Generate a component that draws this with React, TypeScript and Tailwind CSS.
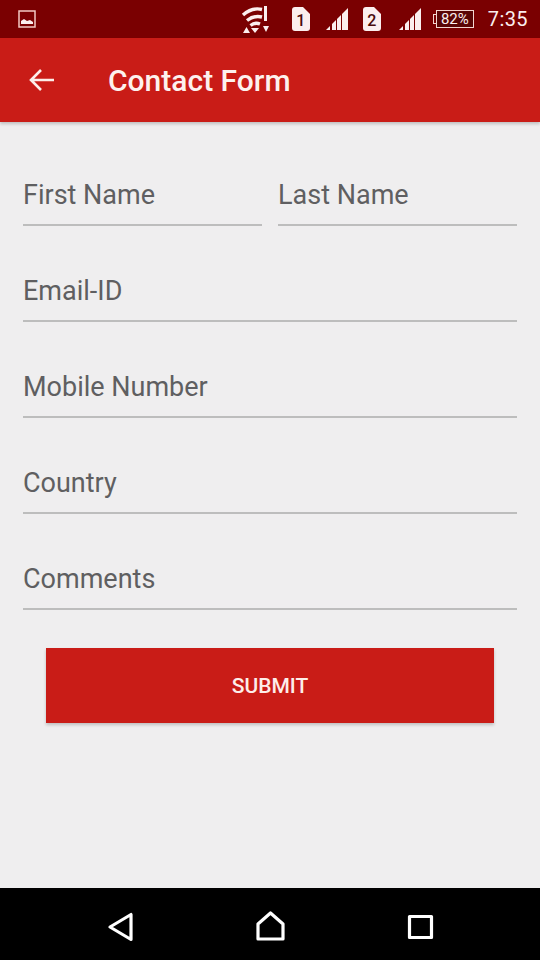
import { useState } from 'react';

function Field({ label }: { label: string }) {
  return (
    <div className="flex-1 h-[96px] flex flex-col justify-end">
      <div className="h-[62px] text-[27px] leading-[66px] text-[#5f5f61]">{label}</div>
      <div className="h-[2px] bg-[#bdbdbd]" />
    </div>
  );
}

function SimCard({ n }: { n: string }) {
  return (
    <div className="relative w-[18px] h-[24px]">
      <svg viewBox="0 0 18 24" className="absolute inset-0 w-full h-full">
        <path d="M3 0h8l7 7v14a3 3 0 0 1-3 3H3a3 3 0 0 1-3-3V3a3 3 0 0 1 3-3z" fill="#fbeeee" />
      </svg>
      <span className="absolute inset-0 text-center text-[16px] leading-[27px] font-medium text-[#4a0a0a]">{n}</span>
    </div>
  );
}

function Signal() {
  return (
    <svg viewBox="0 0 22 22" className="w-[22px] h-[22px]" fill="#fbeeee">
      <path d="M0 22h4v-4z" />
      <path d="M6 22h4V12l-4 4z" />
      <path d="M11 22h4V7l-4 4z" />
      <path d="M16 22h6V0l-6 6z" />
    </svg>
  );
}

function StatusBar() {
  return (
    <div className="h-[38px] bg-[#7a0001] flex items-center text-[#fbeeee]">
      <svg viewBox="0 0 18 18" className="w-[18px] h-[18px] ml-[18px]">
        <rect x="1" y="1" width="16" height="16" fill="none" stroke="#f3c9c4" strokeWidth="1.5" />
        <path d="M3 14v-3l3-2 3 2 3-1 3 2v2z" fill="#fbeeee" />
      </svg>
      <div className="flex-1" />
      <svg viewBox="0 0 30 30" className="w-[30px] h-[30px] mr-[22px] mt-[2px]" fill="none" stroke="#fbeeee" strokeWidth="3.4">
        <path d="M3 10Q12 2 22 4.500" />
        <path d="M7 15.500Q14 10 22 12" />
        <path d="M10.500 20.500Q15 17 20 19" />
        <path d="M11 23h8l-4 5zM3 28l3.500-6 3.500 6zM23 21h6l-3 6zM24 1h3v15h-3z" fill="#fbeeee" stroke="none" />
      </svg>
      <SimCard n="1" />
      <div className="w-[16px]" />
      <Signal />
      <div className="w-[15px]" />
      <SimCard n="2" />
      <div className="w-[18px]" />
      <Signal />
      <div className="w-[15px]" />
      <div className="relative h-[18px] w-[38px] border border-[#f3d5d0] bg-[#5a0505] text-center text-[15px] leading-[17px] text-[#fbeeee]">
        82%
        <div className="absolute left-[-4px] top-[3px] w-[3px] h-[10px] border border-r-0 border-[#f3d5d0]" />
      </div>
      <div className="ml-[14px] mr-[12px] text-[20px] leading-none tracking-[0.4px]">7:35</div>
    </div>
  );
}

export default function App() {
  const [fields] = useState(['Email-ID', 'Mobile Number', 'Country', 'Comments']);

  return (
    <div className="w-[540px] h-[960px] flex flex-col bg-[#efeeef] font-['Roboto',sans-serif]">
      <StatusBar />

      {/* App bar */}
      <div className="h-[84px] bg-[#c91c17] flex items-center shadow-[0_2px_3px_rgba(0,0,0,0.2)] relative">
        <svg viewBox="0 0 26 24" className="w-[26px] h-[24px] ml-[29px]" fill="none" stroke="#fdeeea" strokeWidth="2.6">
          <path d="M25 12H2M12 2L2 12l10 10" />
        </svg>
        <h1 className="ml-[53px] text-[30px] leading-[38px] pt-[1px] font-medium text-[#fdf1ee]">Contact Form</h1>
      </div>

      {/* Form */}
      <div className="flex-1 px-[23px] pt-[8px]">
        <div className="flex gap-[16px]">
          <Field label="First Name" />
          <Field label="Last Name" />
        </div>
        {fields.map((f) => (
          <Field key={f} label={f} />
        ))}
        <button className="block mt-[38px] mx-auto w-[448px] h-[75px] pt-[3px] bg-[#c91c17] text-[#fdeeea] text-[21px] font-medium shadow-[0_2px_3px_rgba(0,0,0,0.2)]">
          SUBMIT
        </button>
      </div>

      {/* Nav bar */}
      <div className="h-[72px] bg-black relative">
        <svg viewBox="0 0 360 72" className="w-[360px] h-[72px] ml-[90px]" fill="none" stroke="#fff" strokeWidth="3.2" strokeLinejoin="round">
          <path d="M20 39L41 26.500v25z" />
          <path d="M168 51V36l12.500-11L193 36v15z" />
          <rect x="319.500" y="28.500" width="22" height="21" />
        </svg>
      </div>
    </div>
  );
}
